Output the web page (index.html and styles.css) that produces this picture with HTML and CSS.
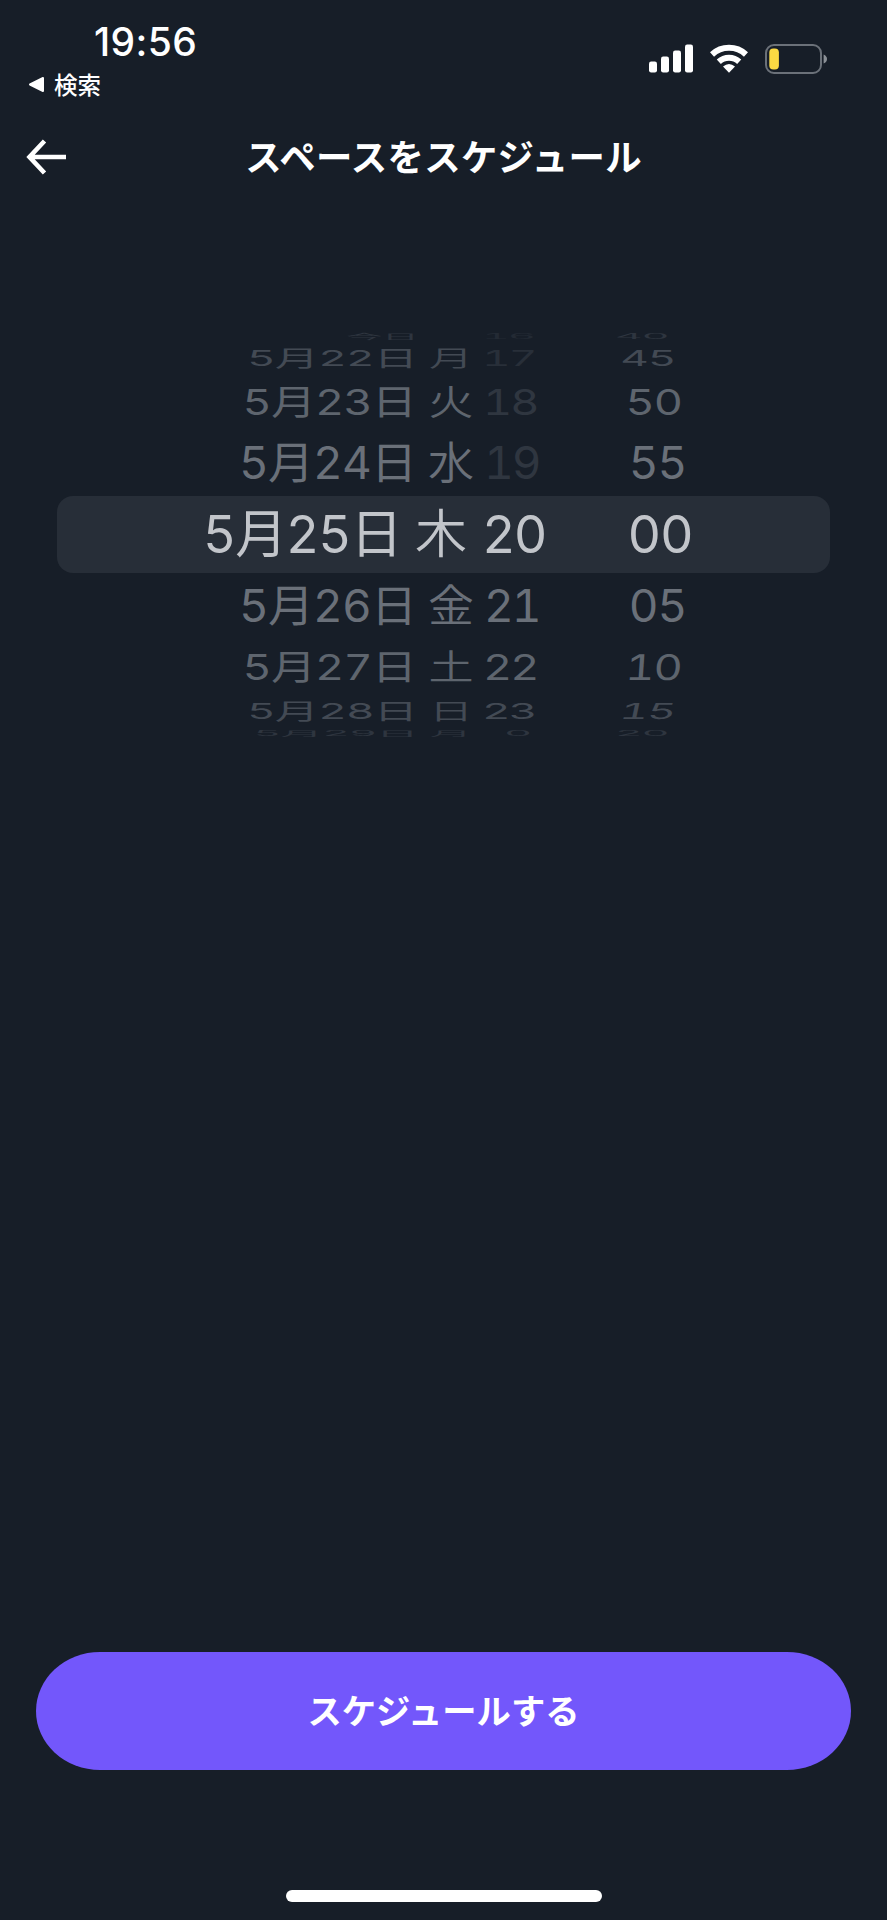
FILE: index.html
```html
<!DOCTYPE html>
<html lang="ja">
<head>
    <meta charset="UTF-8">
    <meta name="viewport" content="width=device-width, initial-scale=1.0">
    <title>スペースをスケジュール</title>
    <link rel="stylesheet" href="styles.css">
</head>
<body>
    <div class="screen">
        <div class="status-bar">
            <div class="status-left">
                <div class="time">19:56</div>
                <div class="back-app">
                    <svg width="17" height="17" viewBox="0 0 17 17"><path d="M2 8.5 L15 2 V15 Z" fill="#fff" stroke="#fff" stroke-width="2" stroke-linejoin="round"/></svg>
                    <span>検索</span>
                </div>
            </div>
            <div class="status-icons">
                <svg class="signal" width="45" height="29" viewBox="0 0 45 29" fill="#fff">
                    <rect x="0" y="17.5" width="8" height="11" rx="2.2"/>
                    <rect x="12" y="12.5" width="8" height="16" rx="2.2"/>
                    <rect x="24" y="6.5" width="8" height="22" rx="2.2"/>
                    <rect x="36" y="0.5" width="8" height="28" rx="2.2"/>
                </svg>
                <svg class="wifi" width="38" height="29" viewBox="0 0 38 29" fill="none" stroke="#fff">
                    <path d="M2 10.5 A25 25 0 0 1 36 10.5" stroke-width="6"/>
                    <path d="M8.8 17.8 A15 15 0 0 1 29.2 17.8" stroke-width="6"/>
                    <path d="M13 22.6 Q19 17.6 25 22.6 L19 28.8 Z" fill="#fff" stroke="none"/>
                </svg>
                <svg class="battery" width="63" height="30" viewBox="0 0 63 30">
                    <rect x="1" y="1" width="55" height="28" rx="8" fill="none" stroke="#6b7179" stroke-width="2"/>
                    <rect x="4.3" y="4.6" width="9.6" height="20.8" rx="4" fill="#fbd943"/>
                    <path d="M58.6 10.5 Q62 12 62 15 Q62 18 58.6 19.5 Z" fill="#8b9096"/>
                </svg>
            </div>
        </div>

        <header class="nav">
            <svg class="back" width="40" height="36" viewBox="0 0 40 36" fill="none" stroke="#fff" stroke-width="4.6"><path d="M18.5 2 L3.5 18 L18.5 34 M3 18 H40"/></svg>
            <h1>スペースをスケジュール</h1>
        </header>

        <div class="picker">
            <div class="row far-4 top">
                <span class="date today">今日</span><span class="day"></span><span class="hour">16</span><span class="minute">40</span>
            </div>
            <div class="row far-3 top">
                <span class="date">5月22日</span><span class="day">月</span><span class="hour">17</span><span class="minute">45</span>
            </div>
            <div class="row far-2 top">
                <span class="date">5月23日</span><span class="day">火</span><span class="hour">18</span><span class="minute">50</span>
            </div>
            <div class="row far-1 top">
                <span class="date">5月24日</span><span class="day">水</span><span class="hour">19</span><span class="minute">55</span>
            </div>
            <div class="row selected">
                <span class="date">5月25日</span><span class="day">木</span><span class="hour">20</span><span class="minute">00</span>
            </div>
            <div class="row far-1">
                <span class="date">5月26日</span><span class="day">金</span><span class="hour">21</span><span class="minute">05</span>
            </div>
            <div class="row far-2 bottom">
                <span class="date">5月27日</span><span class="day">土</span><span class="hour">22</span><span class="minute">10</span>
            </div>
            <div class="row far-3 bottom">
                <span class="date">5月28日</span><span class="day">日</span><span class="hour">23</span><span class="minute">15</span>
            </div>
            <div class="row far-4 bottom">
                <span class="date">5月29日</span><span class="day">月</span><span class="hour single">0</span><span class="minute">20</span>
            </div>
        </div>

        <footer>
            <button class="schedule">スケジュールする</button>
            <div class="home-bar"></div>
        </footer>
    </div>
</body>
</html>
```
FILE: styles.css
```css
* {
    box-sizing: border-box;
    margin: 0;
    padding: 0;
}

body {
    background: #171e28;
    color: #fff;
    font-family: Inter, "Noto Sans CJK JP", sans-serif;
}

.screen {
    display: flex;
    flex-direction: column;
    height: 1920px;
    overflow: hidden;
}

.status-bar {
    display: flex;
    justify-content: space-between;
    height: 120px;
    padding: 18px 59px 0 28px;
}

.time {
    height: 45px;
    padding-left: 66px;
    font-size: 39px;
    font-weight: 550;
    letter-spacing: 0.4px;
    line-height: 47px;
}

.back-app {
    display: flex;
    align-items: center;
    gap: 9px;
    height: 43px;
    font-size: 23.5px;
    font-weight: 500;
}

.back-app span {
    padding-bottom: 2px;
}

.status-icons {
    display: flex;
    align-items: flex-start;
    padding-top: 26px;
}

.wifi {
    margin-left: 16px;
}

.battery {
    margin-left: 17px;
}

.nav {
    display: grid;
    grid-template-columns: 66px 1fr 66px;
    align-items: center;
    height: 74px;
}

.back {
    margin-left: 26px;
}

.nav h1 {
    padding-top: 2px;
    font-size: 36.4px;
    font-weight: 700;
    letter-spacing: 0.3px;
    line-height: 50px;
    text-align: center;
}

/* ホイール本体 */
.picker {
    display: grid;
    grid-template-rows: 12px 32px 56px 66px 77px 66px 56px 32px 12px;
    margin: 136px 57px 0;
}

.row {
    display: grid;
    grid-template-columns: 359px 14px 42px 12px 56px 86px 63px;
    align-items: center;
    height: 100%;
    min-height: 0;
    font-size: 46px;
    font-variant-numeric: tabular-nums;
    font-weight: 390;
    line-height: 0;
    white-space: nowrap;
}

.date {
    grid-column: 1;
    justify-self: end;
    letter-spacing: -0.9px;
    transform-origin: right center;
}

.day {
    grid-column: 3;
    justify-self: center;
    font-weight: 350;
}

.hour {
    grid-column: 5;
    letter-spacing: -2px;
    transform-origin: left center;
}

.hour.single {
    padding-left: 24px;
}

.minute {
    grid-column: 7;
    justify-self: center;
    letter-spacing: -1.2px;
}

.selected {
    grid-template-columns: 344px 14px 52px 15px 60px 84px 68px;
    background: #272e38;
    border-radius: 16px;
    color: #c2c5ca;
    font-size: 52px;
}

.selected .date {
    letter-spacing: -1.4px;
}

.far-1 {
    color: #6a7079;
}

.far-1 span {
    transform: scaleY(0.97);
}

.far-2 {
    color: #5e656e;
    grid-template-columns: 359px 14px 42px 11px 56px 86px 58px;
}

.far-2 span {
    transform: scale(0.98, 0.77);
}

.far-3 {
    color: #434a54;
    grid-template-columns: 360px 13px 42px 10px 56px 86px 48px;
}

.far-3 span {
    transform: scale(0.96, 0.48);
}

.far-4 {
    color: #2e353f;
    grid-template-columns: 361px 12px 42px 10px 56px 86px 36px;
}

.far-4 span {
    transform: scale(0.93, 0.16);
}

.far-4 .today {
    transform: scale(0.8, 0.16);
}

/* 円筒の傾き */
.far-2.bottom .minute {
    transform: scale(0.98, 0.77) skewX(-3deg);
}

.far-3.bottom .minute {
    transform: scale(0.96, 0.48) skewX(-6deg);
}

/* 選択できない時刻 */
.top .hour {
    color: #2f3640;
}

.far-3.top .hour {
    color: #282f39;
}

.far-4.top .hour {
    color: #232a34;
}

footer {
    display: flex;
    flex-direction: column;
    align-items: center;
    margin-top: auto;
    padding-bottom: 18px;
}

.schedule {
    width: 815px;
    height: 118px;
    padding-bottom: 4px;
    border: none;
    border-radius: 64px / 59px;
    background: #7357fb;
    color: #fff;
    font-family: inherit;
    font-size: 34.3px;
    font-weight: 700;
}

.home-bar {
    width: 316px;
    height: 12px;
    margin-top: 120px;
    border-radius: 6px;
    background: #fff;
}
```
